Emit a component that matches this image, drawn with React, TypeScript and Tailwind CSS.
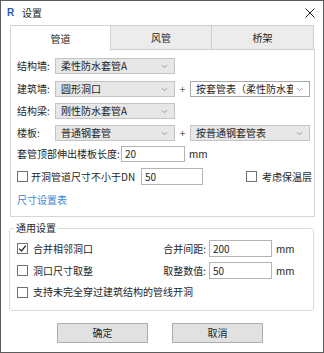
import React from 'react';

const FONT = { fontFamily: '"Noto Sans CJK SC", "Noto Sans", sans-serif' };

function Chevron() {
  return (
    <svg width="7" height="5" viewBox="0 0 7 5" className="shrink-0">
      <path d="M1 1.2 L3.5 3.7 L6 1.2" fill="none" stroke="#8a8a8a" strokeWidth="0.9" />
    </svg>
  );
}

function Select({ text, width, white = false }: { text: string; width: string; white?: boolean }) {
  return (
    <div
      className={`${width} h-full flex items-center justify-between pl-[5px] pr-[6px] border ${
        white ? 'bg-white border-[#a9a9a9]' : 'bg-[#e7e7e7] border-[#c4c4c4]'
      }`}
    >
      <span className="whitespace-nowrap overflow-hidden leading-[14px] mr-[3px]">{text}</span>
      <Chevron />
    </div>
  );
}

function Box({ checked = false }: { checked?: boolean }) {
  return (
    <div className="w-[11px] h-[11px] border border-[#707070] bg-white flex items-center justify-center shrink-0">
      {checked && (
        <svg width="9" height="9" viewBox="0 0 9 9">
          <path d="M1.2 4.6 L3.5 7 L7.8 1.6" fill="none" stroke="#222" strokeWidth="1.3" />
        </svg>
      )}
    </div>
  );
}

function Input({ value, width }: { value: string; width: string }) {
  return (
    <div className={`${width} h-full border border-[#b4b4b4] bg-white flex items-center pl-[3px]`}>
      {value}
    </div>
  );
}

export default function App() {
  return (
    <div
      className="w-[324px] h-[353px] bg-white border border-[#5c5c5c] flex flex-col text-[10px] text-[#1e1e1e] leading-none"
      style={FONT}
    >
      {/* title bar */}
      <div className="h-[24px] flex items-center pl-[5px] pr-[8px]">
        <div className="w-[9px] h-[10px] flex items-center justify-center text-[10px] font-bold text-[#2a5caa]" style={{ fontFamily: '"Liberation Sans", sans-serif' }}>
          R
        </div>
        <span className="ml-[7px]">设置</span>
        <svg width="10" height="10" viewBox="0 0 10 10" className="ml-auto">
          <path d="M0.5 0.5 L9.5 9.5 M9.5 0.5 L0.5 9.5" stroke="#222" strokeWidth="1" />
        </svg>
      </div>

      {/* tabs */}
      <div className="ml-[9px] w-[304px] h-[25px] flex relative z-10">
        <div className="w-[101px] h-[26px] bg-white border border-[#d3d3d3] border-b-0 flex items-center justify-center">管道</div>
        <div className="w-[101px] h-[25px] bg-[#ececec] border border-l-0 border-[#cfcfcf] flex items-center justify-center">风管</div>
        <div className="w-[102px] h-[25px] bg-[#ececec] border border-l-0 border-[#cfcfcf] flex items-center justify-center">桥架</div>
      </div>

      {/* pipe panel */}
      <div className="ml-[9px] w-[305px] h-[168px] -mt-px border border-[#d6d6d6] bg-white pt-[8px] pl-[6px] flex flex-col">
        <div className="h-[16px] flex items-center">
          <span className="w-[38px]">结构墙:</span>
          <Select text="柔性防水套管A" width="w-[120px]" />
        </div>
        <div className="h-[16px] mt-[7px] flex items-center">
          <span className="w-[38px]">建筑墙:</span>
          <Select text="圆形洞口" width="w-[120px]" />
          <span className="w-[15px] text-center text-[#555]">+</span>
          <Select text="按套管表（柔性防水套管A）" width="w-[120px]" white />
        </div>
        <div className="h-[16px] mt-[6px] flex items-center">
          <span className="w-[38px]">结构梁:</span>
          <Select text="刚性防水套管A" width="w-[120px]" />
        </div>
        <div className="h-[16px] mt-[6px] flex items-center">
          <span className="w-[38px]">楼板:</span>
          <Select text="普通钢套管" width="w-[120px]" />
          <span className="w-[15px] text-center text-[#555]">+</span>
          <Select text="按普通钢套管表" width="w-[120px]" />
        </div>
        <div className="h-[16px] mt-[5px] flex items-center">
          <span className="w-[104px]">套管顶部伸出楼板长度:</span>
          <Input value="20" width="w-[64px]" />
          <span className="ml-[4px]">mm</span>
        </div>
        <div className="h-[17px] mt-[6px] flex items-center">
          <Box />
          <span className="ml-[3px] w-[110px]">开洞管道尺寸不小于DN</span>
          <Input value="50" width="w-[62px]" />
          <div className="ml-[43px] flex items-center">
            <Box />
            <span className="ml-[5px]">考虑保温层</span>
          </div>
        </div>
        <div className="mt-[10px] text-[#3c86d8]">尺寸设置表</div>
      </div>

      {/* general settings group */}
      <div className="ml-[8px] mt-[11px] w-[305px] h-[83px] border border-[#dcdcdc] rounded-[3px] relative pt-[11px] pl-[7px] flex flex-col">
        <span className="absolute -top-[6px] left-[4px] px-[2px] bg-white">通用设置</span>
        <div className="h-[17px] flex items-center">
          <Box checked />
          <span className="ml-[5px] w-[130px]">合并相邻洞口</span>
          <span className="w-[43px] text-right">合并间距:</span>
          <span className="w-[3px]" />
          <Input value="200" width="w-[63px]" />
          <span className="ml-[4px]">mm</span>
        </div>
        <div className="h-[17px] mt-[5px] flex items-center">
          <Box />
          <span className="ml-[5px] w-[130px]">洞口尺寸取整</span>
          <span className="w-[43px] text-right">取整数值:</span>
          <span className="w-[3px]" />
          <Input value="50" width="w-[63px]" />
          <span className="ml-[4px]">mm</span>
        </div>
        <div className="h-[12px] mt-[7px] flex items-center">
          <Box />
          <span className="ml-[5px]">支持未完全穿过建筑结构的管线开洞</span>
        </div>
      </div>

      {/* buttons */}
      <div className="mt-[12px] ml-[56px] flex gap-[24px]">
        <button className="w-[91px] h-[20px] bg-[#e1e1e1] border border-[#adadad] flex items-center justify-center">确定</button>
        <button className="w-[91px] h-[20px] bg-[#e1e1e1] border border-[#adadad] flex items-center justify-center">取消</button>
      </div>
    </div>
  );
}
